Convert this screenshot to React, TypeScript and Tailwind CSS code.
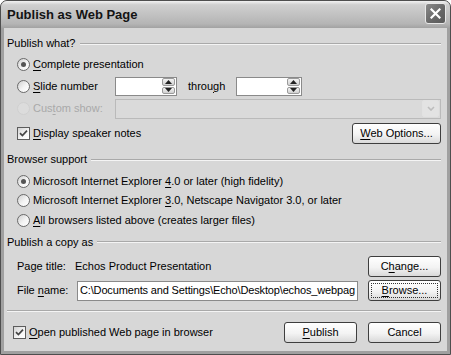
import React from 'react'
import clsx from 'clsx'

const U = ({ children }: { children: React.ReactNode }) => (
  <span className="underline underline-offset-[2px]">{children}</span>
)

function Radio({ checked, disabled }: { checked?: boolean; disabled?: boolean }) {
  return (
    <span
      className={clsx(
        'flex size-[13px] shrink-0 items-center justify-center rounded-full border',
        disabled
          ? 'border-[#d0d0d0] bg-[#dcdcdc]'
          : 'border-[#6a6a6a] bg-[linear-gradient(135deg,#cfcfcf,#f4f4f4_55%,#ffffff)]'
      )}
    >
      {checked && <span className="size-[5px] rounded-full bg-[#555]" />}
    </span>
  )
}

function Check() {
  return (
    <span className="flex size-[13px] shrink-0 items-center justify-center border border-[#5c5c5c] bg-[linear-gradient(135deg,#d2d2d2,#f6f6f6_60%,#ffffff)]">
      <svg width="9" height="9" viewBox="0 0 9 9">
        <path d="M1 4.2 L3.4 6.6 L8 1.6" stroke="#454545" strokeWidth="1.7" fill="none" />
      </svg>
    </span>
  )
}

function Btn({ children, w = 'w-[73px]', focus }: { children: React.ReactNode; w?: string; focus?: boolean }) {
  return (
    <button
      className={clsx(
        w,
        'flex h-[21px] shrink-0 items-center justify-center rounded-[3px] border border-[#3e3e3e] bg-[linear-gradient(to_bottom,#ffffff,#f3f3f3_55%,#d9d9d9)] p-[2px] text-[11px] text-black'
      )}
    >
      <span
        className={clsx(
          'flex h-full w-full items-center justify-center',
          focus && 'border border-dotted border-[#333]'
        )}
      >
        {children}
      </span>
    </button>
  )
}

function Spin({ w }: { w: string }) {
  return (
    <div className={clsx(w, 'flex h-[19px] items-center justify-end border border-[#8a8a8a] bg-white pr-[1px]')}>
      <div className="flex h-[16px] w-[13px] flex-col gap-[1px]">
        {[0, 1].map((i) => (
          <div
            key={i}
            className="flex flex-1 items-center justify-center rounded-[2px] border border-[#9a9a9a] bg-[linear-gradient(to_bottom,#f4f4f4,#d0d0d0)]"
          >
            <svg width="7" height="4" viewBox="0 0 7 4">
              <path d={i === 0 ? 'M0 4 L3.5 0 L7 4 Z' : 'M0 0 L3.5 4 L7 0 Z'} fill="#222" />
            </svg>
          </div>
        ))}
      </div>
    </div>
  )
}

function Header({ children, h }: { children: React.ReactNode; h: string }) {
  return (
    <div className={clsx(h, 'flex items-center')}>
      <span>{children}</span>
      <div className="ml-[4px] h-[2px] flex-1 border-t border-b border-t-[#a9a9a9] border-b-[#f4f4f4]" />
    </div>
  )
}

export default function App() {
  return (
    <div className="h-[355px] w-[451px] overflow-hidden bg-white font-['Liberation_Sans',Arial,sans-serif] text-[11px] text-black">
      <div className="flex h-full flex-col rounded-t-[7px] border border-[#4e4e4e] bg-[#a0a0a0]">
        {/* title bar */}
        <div className="flex h-[27px] shrink-0 items-start justify-between rounded-t-[6px] bg-[linear-gradient(to_bottom,#f2f2f2_0%,#cfcfcf_14%,#c2c2c2_50%,#b4b4b4_85%,#a2a2a2_100%)] pl-[6px] pr-[4px]">
          <span className="pt-[6px] text-[13px] leading-[15px] font-bold text-[#141414]">Publish as Web Page</span>
          <div className="mt-[2px] flex size-[21px] items-center justify-center rounded-[3px] border border-[#e8e8e8] bg-[linear-gradient(135deg,#8a8a8a,#666_60%,#5a5a5a)]">
            <svg width="11" height="11" viewBox="0 0 11 11">
              <path d="M1.5 1.5 L9.5 9.5 M9.5 1.5 L1.5 9.5" stroke="#fff" strokeWidth="2.2" strokeLinecap="square" />
            </svg>
          </div>
        </div>

        <div className="flex-1 px-[3px] pb-[3px]">
          <div className="h-full bg-[#d7d7d7] pt-[5px] pr-[6px] pl-[3px]">
            <Header h="h-[21px]">Publish what?</Header>

            <div className="flex h-[21px] items-center gap-[3px] pl-[10px]">
              <Radio checked />
              <span>
                <U>C</U>omplete presentation
              </span>
            </div>

            <div className="flex h-[22px] items-center pl-[10px]">
              <div className="flex w-[98px] items-center gap-[3px]">
                <Radio />
                <span>
                  <U>S</U>lide number
                </span>
              </div>
              <Spin w="w-[62px]" />
              <span className="ml-[11px] w-[48px]">
                throu<U>g</U>h
              </span>
              <Spin w="w-[66px]" />
            </div>

            <div className="flex h-[23px] items-center pl-[10px]">
              <div className="flex w-[98px] items-center gap-[3px] text-[#a9a9a9]">
                <Radio disabled />
                <span>
                  Cus<U>t</U>om show:
                </span>
              </div>
              <div className="flex h-[20px] flex-1 items-center justify-end border border-[#bababa] bg-[#dadada] pr-[1px]">
                <div className="flex size-[17px] items-center justify-center rounded-[2px] border border-[#e2e2e2] bg-[#e3e3e3]">
                  <svg width="8" height="5" viewBox="0 0 8 5">
                    <path d="M1 1 L4 4 L7 1" stroke="#bdbdbd" strokeWidth="1.6" fill="none" />
                  </svg>
                </div>
              </div>
            </div>

            <div className="flex h-[27px] items-center justify-between pl-[10px]">
              <div className="flex items-center gap-[3px]">
                <Check />
                <span>
                  <U>D</U>isplay speaker notes
                </span>
              </div>
              <Btn w="w-[89px]">
                <span>
                  <U>W</U>eb Options...
                </span>
              </Btn>
            </div>

            <Header h="h-[25px]">Browser support</Header>

            <div className="flex h-[19px] items-center gap-[3px] pl-[10px]">
              <Radio checked />
              <span>
                Microsoft Internet Explorer <U>4</U>.0 or later (high fidelity)
              </span>
            </div>
            <div className="flex h-[19px] items-center gap-[3px] pl-[10px]">
              <Radio />
              <span>
                Microsoft Internet Explorer <U>3</U>.0, Netscape Navigator 3.0, or later
              </span>
            </div>
            <div className="flex h-[20px] items-center gap-[3px] pl-[10px]">
              <Radio />
              <span>
                <U>A</U>ll browsers listed above (creates larger files)
              </span>
            </div>

            <Header h="h-[24px]">Publish a copy as</Header>

            <div className="flex h-[24px] items-center pl-[10px]">
              <span className="w-[58px]">Page title:</span>
              <span className="flex-1">Echos Product Presentation</span>
              <Btn>
                <span>
                  C<U>h</U>ange...
                </span>
              </Btn>
            </div>

            <div className="flex h-[25px] items-center pl-[10px]">
              <span className="w-[60px]">
                File <U>n</U>ame:
              </span>
              <div className="flex h-[20px] w-[281px] items-center overflow-hidden border border-[#8a8a8a] bg-white pl-[2px] tracking-[-0.15px] whitespace-nowrap">
                C:\Documents and Settings\Echo\Desktop\echos_webpag
              </div>
              <div className="flex-1" />
              <Btn focus>
                <span>
                  <U>B</U>rowse...
                </span>
              </Btn>
            </div>

            <div className="flex h-[16px] items-center">
              <div className="h-[2px] flex-1 border-t border-b border-t-[#a9a9a9] border-b-[#f4f4f4]" />
            </div>

            <div className="flex h-[27px] items-center pl-[6px]">
              <div className="flex flex-1 items-center gap-[3px]">
                <Check />
                <span>
                  <U>O</U>pen published Web page in browser
                </span>
              </div>
              <div className="flex gap-[11px]">
                <Btn>
                  <span>
                    <U>P</U>ublish
                  </span>
                </Btn>
                <Btn>Cancel</Btn>
              </div>
            </div>
          </div>
        </div>
      </div>
    </div>
  )
}
